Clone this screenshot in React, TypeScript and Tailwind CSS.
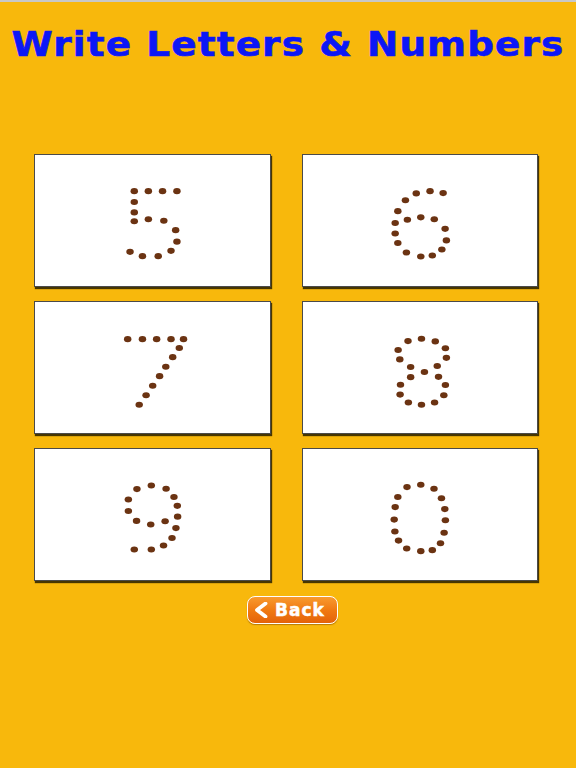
type Dot = [number, number];

const digits: { label: string; dots: Dot[] }[] = [
  {
    label: '5',
    dots: [
      [100, 36.7], [114.3, 36.7], [128.7, 36.7], [143.3, 36.7], [100, 47.7], [100, 58.3], [100, 67.3],
      [114.3, 65.3], [130, 66.7], [142, 76.3], [143.3, 88], [137.3, 97.3], [124.3, 102.7], [108.3, 102.7], [95.7, 98.3],
    ],
  },
  {
    label: '6',
    dots: [
      [128.7, 36.7], [142, 38.7], [114.7, 39], [103.7, 46], [96, 57], [93.3, 69], [93.3, 79.7], [96, 89.3],
      [104.7, 99], [119.3, 103], [131, 102], [140.7, 96], [145.3, 86.7], [144, 75], [133, 65.3], [119.3, 63.3], [105.7, 65.7],
    ],
  },
  {
    label: '7',
    dots: [
      [93.3, 37.7], [108.3, 37.7], [122.7, 37.7], [137.3, 37.7], [150, 37.7], [145.7, 46.7], [139, 56],
      [132, 65.7], [125.7, 75.3], [118.7, 85], [112, 94.7], [105, 104.3],
    ],
  },
  {
    label: '8',
    dots: [
      [120, 37.3], [106.3, 39.7], [134, 40], [144.3, 47], [96.3, 48.7], [98, 58.3], [145.3, 56.7], [109, 66],
      [136, 65], [123, 71], [109, 76.3], [137.3, 76], [98.7, 84], [144.3, 84.3], [98.3, 94], [142.7, 94.7],
      [106.7, 102], [120, 104.3], [133.3, 102],
    ],
  },
  {
    label: '9',
    dots: [
      [117.3, 37], [102.7, 40.7], [132.3, 40.3], [140.3, 48.7], [94, 51.3], [143.7, 57.7], [94, 63], [144, 68.7],
      [102.3, 73], [116.7, 76.7], [131.3, 73.3], [142.3, 80.3], [138.3, 90.3], [129.7, 98], [117.3, 102], [100, 102],
    ],
  },
  {
    label: '0',
    dots: [
      [119.3, 36.3], [105.3, 38.7], [132.7, 40.3], [96, 48.7], [140.3, 50], [93.3, 59], [143.7, 61], [92.3, 71.7],
      [144.3, 72.3], [93, 83.7], [143, 85], [96.7, 93], [139.3, 95.7], [105, 101], [119.3, 103.7], [131, 102.7],
    ],
  },
];

function DigitCard({ dots, label }: { dots: Dot[]; label: string }) {
  return (
    <button
      aria-label={label}
      className="h-[133px] bg-white border border-[#4a4a4a] shadow-[1px_2px_1px_rgba(40,30,0,0.85)] p-0 cursor-pointer"
    >
      <svg viewBox="0 0 237 133" className="w-full h-full block">
        {dots.map(([x, y], i) => (
          <ellipse key={i} cx={x} cy={y} rx={3.8} ry={3.1} fill="#6b3312" />
        ))}
      </svg>
    </button>
  );
}

export default function App() {
  return (
    <div className="w-[576px] h-[768px] bg-[#f8b80c] flex flex-col overflow-hidden">
      <div className="h-[2px] bg-[#c8c8c8]" />
      <h1 className="mt-[22px] text-center text-[34px] leading-[40px] font-bold tracking-[1px] scale-x-[1.1] text-[#0c17f6] [-webkit-text-stroke:0.6px_#0c17f6] font-['DejaVu_Sans',sans-serif] whitespace-nowrap">
        Write Letters &amp; Numbers
      </h1>

      <div className="mt-[90px] pl-[34px] grid grid-cols-[237px_236px] gap-x-[31px] gap-y-[14px]">
        {digits.map(d => (
          <DigitCard key={d.label} dots={d.dots} label={d.label} />
        ))}
      </div>

      <div className="mt-[15px] pl-[247px]">
        <button className="w-[91px] h-[28px] rounded-[8px] border-[1.5px] border-white bg-gradient-to-b from-[#f89a2e] via-[#f07a12] to-[#e4620a] shadow-[0_1px_1px_rgba(120,60,0,0.5)] flex items-center gap-[7px] pl-[6px] text-white font-bold text-[17px] tracking-[1px] [-webkit-text-stroke:0.5px_white] font-['DejaVu_Sans',sans-serif]">
          <svg viewBox="0 0 14 16" className="w-[14px] h-[16px]">
            <path d="M11.5 1.5 L3 8 L11.5 14.5" fill="none" stroke="white" strokeWidth={3.8} strokeLinecap="round" strokeLinejoin="round" />
          </svg>
          <span className="leading-none">Back</span>
        </button>
      </div>
    </div>
  );
}
